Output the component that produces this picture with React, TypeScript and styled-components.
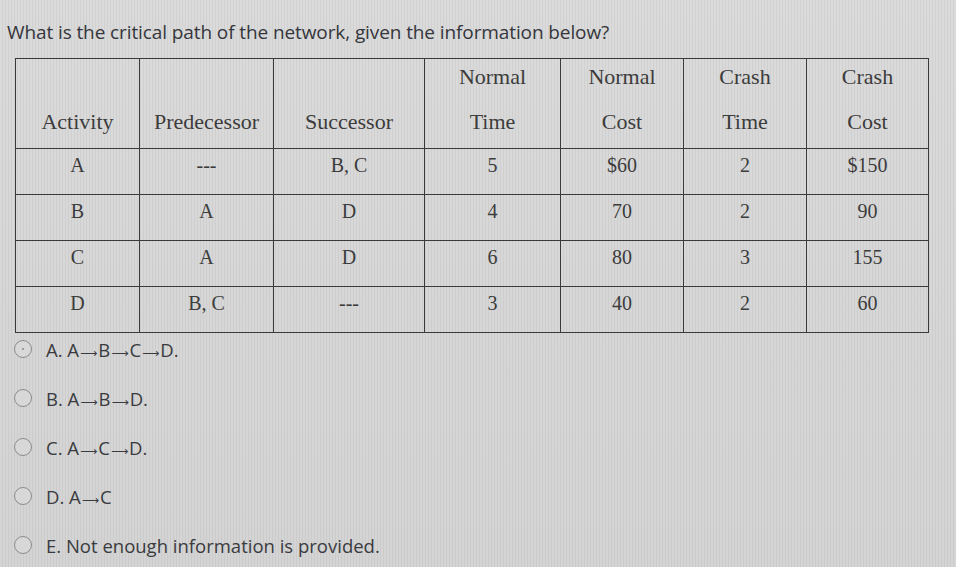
import React from "react";
import styled, { createGlobalStyle } from "styled-components";

const Global = createGlobalStyle`
  html, body { margin: 0; padding: 0; }
  body {
    width: 956px;
    height: 567px;
    overflow: hidden;
    background: #d5d5d5;
  }
`;

const Page = styled.div`
  width: 956px;
  height: 567px;
  box-sizing: border-box;
  background:
    repeating-linear-gradient(90deg, rgba(255,255,255,0.05) 0 2px, rgba(0,0,0,0.035) 2px 3px),
    linear-gradient(180deg, #d9d9d9 0%, #d4d4d4 60%, #d2d2d2 100%);
  padding-top: 19px;
  display: flex;
  flex-direction: column;
`;

const Question = styled.div`
  font-family: "Open Sans", "Liberation Sans", sans-serif;
  font-size: 19px;
  line-height: 26px;
  color: #35363c;
  padding-left: 7px;
  height: 26px;
  letter-spacing: -0.1px;
`;

const Table = styled.table`
  margin: 13px 0 0 15px;
  border-collapse: collapse;
  table-layout: fixed;
  width: 913px;
  font-family: "Liberation Serif", "Times New Roman", serif;
  color: #3c3c3c;
`;

const Col = styled.col<{ $w: number }>`
  width: ${(p) => p.$w}px;
`;

const HeadCell = styled.th`
  border: 1.5px solid #3a3a3a;
  height: 89px;
  padding: 0;
  font-weight: normal;
  font-size: 22px;
  vertical-align: top;
  text-align: center;
`;

const HeadLine = styled.div`
  height: 36px;
  line-height: 36px;
  & + & {
    margin-top: 9px;
  }
`;

const Cell = styled.td`
  border: 1.5px solid #3a3a3a;
  height: 46px;
  padding: 0 0 14px 0;
  box-sizing: border-box;
  font-size: 20px;
  text-align: center;
  vertical-align: middle;
  line-height: 24px;
`;

const Options = styled.div`
  margin-top: 3px;
  display: flex;
  flex-direction: column;
  gap: 23px;
`;

const Option = styled.label`
  display: flex;
  align-items: center;
  height: 26px;
  padding-left: 14px;
  gap: 14px;
  font-family: "Open Sans", "Liberation Sans", sans-serif;
  font-size: 18.5px;
  color: #3a3b40;
`;

const Radio = styled.span<{ $focus?: boolean }>`
  width: 18px;
  height: 18px;
  box-sizing: border-box;
  border-radius: 50%;
  border: 1.5px solid #8c8c8c;
  background: #d8d8d8;
  display: flex;
  align-items: center;
  justify-content: center;
  &::after {
    content: "";
    width: 2px;
    height: 2px;
    border-radius: 50%;
    background: ${(p) => (p.$focus ? "#8a8a8a" : "transparent")};
  }
`;

const Arrow = styled.span`
  font-family: "DejaVu Sans", sans-serif;
  font-size: 12px;
  margin: 0 1px;
`;

const cols = [124, 134, 151, 136, 123, 123, 122];

const headers: [string, string][] = [
  ["", "Activity"],
  ["", "Predecessor"],
  ["", "Successor"],
  ["Normal", "Time"],
  ["Normal", "Cost"],
  ["Crash", "Time"],
  ["Crash", "Cost"],
];

const rows: string[][] = [
  ["A", "---", "B, C", "5", "$60", "2", "$150"],
  ["B", "A", "D", "4", "70", "2", "90"],
  ["C", "A", "D", "6", "80", "3", "155"],
  ["D", "B, C", "---", "3", "40", "2", "60"],
];

const withArrows = (s: string) => {
  const parts = s.split("→");
  return parts.map((p, i) => (
    <React.Fragment key={i}>
      {p}
      {i < parts.length - 1 && <Arrow>⟶</Arrow>}
    </React.Fragment>
  ));
};

const options = [
  "A. A→B→C→D.",
  "B. A→B→D.",
  "C. A→C→D.",
  "D. A→C",
  "E. Not enough information is provided.",
];

export default function App() {
  return (
    <>
      <Global />
      <Page>
        <Question>What is the critical path of the network, given the information below?</Question>
        <Table>
          <colgroup>
            {cols.map((w, i) => (
              <Col key={i} $w={w} />
            ))}
          </colgroup>
          <thead>
            <tr>
              {headers.map(([a, b], i) => (
                <HeadCell key={i}>
                  <HeadLine>{a}</HeadLine>
                  <HeadLine>{b}</HeadLine>
                </HeadCell>
              ))}
            </tr>
          </thead>
          <tbody>
            {rows.map((r, i) => (
              <tr key={i}>
                {r.map((c, j) => (
                  <Cell key={j}>{c}</Cell>
                ))}
              </tr>
            ))}
          </tbody>
        </Table>
        <Options>
          {options.map((o, i) => (
            <Option key={i}>
              <Radio $focus={i === 0} />
              <span>{withArrows(o)}</span>
            </Option>
          ))}
        </Options>
      </Page>
    </>
  );
}
